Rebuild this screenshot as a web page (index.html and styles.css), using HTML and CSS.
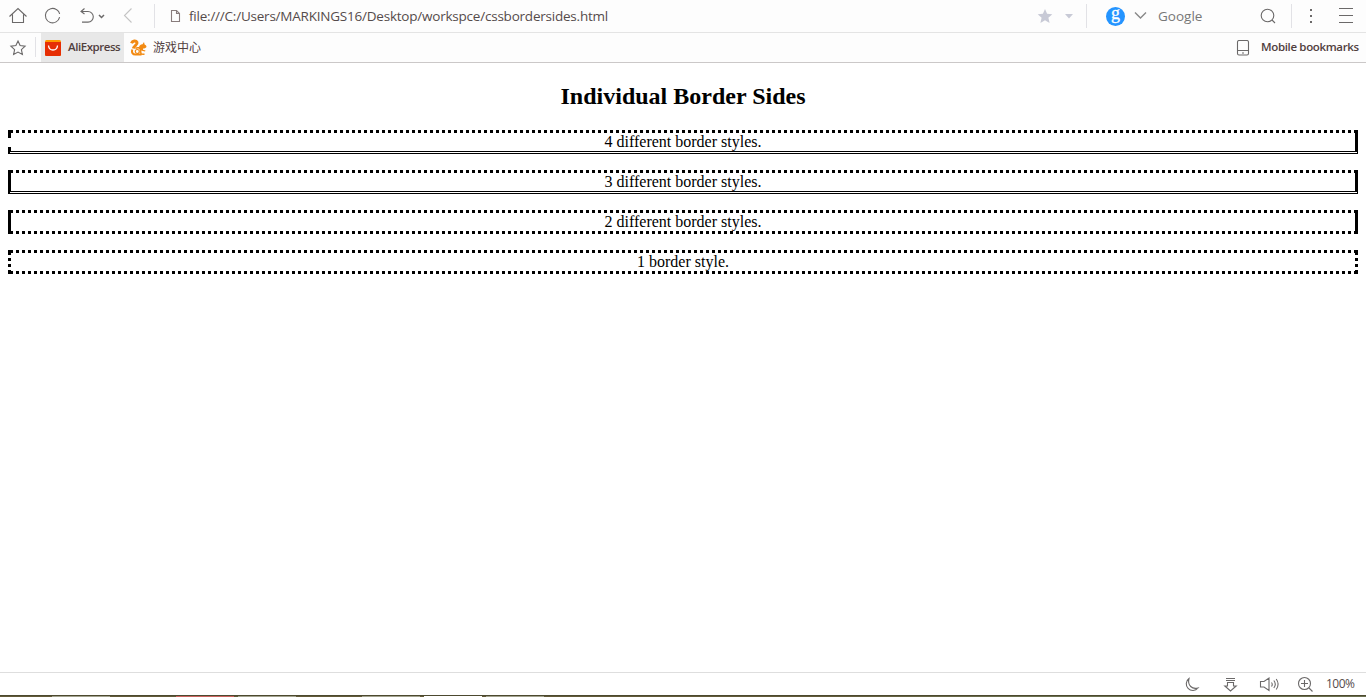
FILE: index.html
```html
<!DOCTYPE html>
<html lang="en">
<head>
<meta charset="utf-8">
<title>Individual Border Sides</title>
<link rel="stylesheet" href="styles.css">
</head>
<body>
<header class="toolbar">
  <svg class="icon tools" width="155" height="32" viewBox="0 0 155 32">
    <path d="M9.500 16.500 18 8.500l8.500 8M12.500 14.500v8h11v-8" />
    <path d="M56.500 9.600a7.200 7.200 0 1 0 3.100 7.500M59.600 14A7 7 0 0 0 54.500 8.800" />
    <path d="M84.500 8.500 81 11.500l3.500 2.500M81 11.500h7a5.300 5.300 0 0 1 0 10.600H82" />
    <path class="bold" d="M99 15l2.500 2.500L104 15" />
    <path class="pale" d="M131.500 8.500 124.500 15.500l7 7" />
    <path class="rule" d="M154.500 4v24" />
  </svg>
  <svg class="icon page-icon" width="12" height="14" viewBox="0 0 12 14"><path d="M1.500 1.500h5l3 3v8h-8zM6.500 1.500v3h3" /></svg>
  <span class="address">file:///C:/Users/MARKINGS16/Desktop/workspce/cssbordersides.html</span>
  <svg class="icon star" width="70" height="32" viewBox="1034 0 70 32">
    <path class="pale-fill" d="M1045 9l2.100 4.800 5.200.5-3.900 3.500 1.200 5.200-4.600-2.700-4.600 2.700 1.200-5.200-3.900-3.500 5.200-.5zM1065 14h8l-4 4.500z" />
    <path class="rule" d="M1086.500 4v24" />
  </svg>
  <span class="engine">g</span>
  <svg class="icon chevron" width="33" height="32" viewBox="1125 0 33 32"><path d="M1135 12.500l5.500 5.500 5.500-5.500" /></svg>
  <span class="search">Google</span>
  <svg class="icon actions" width="116" height="32" viewBox="1250 0 116 32">
    <circle cx="1267.500" cy="15.500" r="6.300" /><path d="M1272 20l3 3" />
    <path class="rule" d="M1291.500 4v24" />
    <path class="dots" d="M1310 9h2v2h-2zM1310 15h2v2h-2zM1310 21h2v2h-2z" />
    <path d="M1339 8.500h14M1339 15.500h14M1339 22.500h14" />
  </svg>
</header>
<nav class="bookmarks">
  <svg class="icon" width="41" height="29" viewBox="0 33 41 29">
    <path d="M18 41l2.100 4.600 5 .6-3.700 3.400 1 4.900-4.400-2.400-4.400 2.400 1-4.900-3.700-3.400 5-.6z" />
    <path class="rule" d="M35.500 37v20" />
  </svg>
  <a class="bookmark active">
    <svg width="16" height="16" viewBox="0 0 16 16"><rect width="16" height="16" rx="1.500" fill="#f90" /><path d="M0 2h16v12.500q0 1.500-1.500 1.500h-13Q0 16 0 14.500z" fill="#e62e04" /><path d="M3.500 5.500c.5 6 8.500 6 9 0" fill="none" stroke="#fff" stroke-width="1.300" /></svg>
    <span>AliExpress</span>
  </a>
  <a class="bookmark games">
    <svg width="17" height="17" viewBox="0 0 17 17">
      <g fill="none" stroke="#f28a12">
        <path d="M1.500 4.200C2.500 1.500 6 1.200 7 3.400 7.800 5.600 3.800 7 3.500 9.500" stroke-width="3" />
        <path d="M2.200 10.500C1.500 13.500 2.500 15.500 5.500 15.500h6" stroke-width="2" />
        <circle cx="7.300" cy="12.500" r="2" stroke-width="1.200" />
        <path d="M5.500 9.500c2-1.500 4.500-1 5 1.500l.5 4 3.500.2" stroke-width="1.500" />
      </g>
      <path d="M9 8.500c0-2 1.500-3 3.500-3.300L14 3l.6 2.500c1.300.6 1.900 1.500 1.900 2.500-1 1.200-2 1.500-3.500 1.500v1.200l2.500.8-.5 1-4-1z" fill="#f28a12" />
    </svg>
    <span>游戏中心</span>
  </a>
  <svg class="icon mobile" width="14" height="16" viewBox="0 0 14 16"><rect x="1.500" y=".5" width="11" height="14.500" rx="1.500" /><path d="M1.500 10.500h11M6 13h2" /></svg>
  <span class="mobile-label">Mobile bookmarks</span>
</nav>
<main class="content">
  <h2 class="title">Individual Border Sides</h2>
  <p class="box dot-top broken-left solid-right double-bottom">4 different border styles.</p>
  <p class="box dot-top solid-left solid-right double-bottom">3 different border styles.</p>
  <p class="box dot-top dot-bottom solid-left solid-right">2 different border styles.</p>
  <p class="box dot-top dot-bottom dot-sides">1 border style.</p>
</main>
<footer class="status">
  <svg class="icon" width="160" height="22" viewBox="1166 673 160 22">
    <path d="M1189 678.500a6.600 6.600 0 1 0 9 9.500c-3 .8-5.500.3-7.300-1.500s-2.500-5-1.700-8z" />
    <path d="M1226 678.500h9M1226 680.500h9M1227.500 682.500h6v3.500h2.700l-5.700 5-5.700-5h2.700z" />
    <path d="M1260.500 681.500h3.500l5-3.500v12.500l-5-3.500h-3.500zM1271.500 682.500q1.500 2 0 4M1273.800 680.500q3 3.700 0 7.500M1276.200 679q3.800 5 0 10.500" />
    <circle cx="1304.500" cy="683.500" r="6" /><path d="M1301 683.500h7M1304.500 680v7M1309 688l3.500 3.500" />
  </svg>
  <span class="zoom">100%</span>
</footer>
<div class="taskbar">
  <i class="gap-first"></i><i class="task"></i><i class="gap-wide"></i><i class="task alert"></i><i class="task"></i><i class="gap-wide"></i><i class="task"></i><i class="task current"></i><i class="task"></i>
</div>
</body>
</html>
```
FILE: styles.css
```css
* { box-sizing: border-box; }
body {
  margin: 0;
  height: 697px;
  display: flex;
  flex-direction: column;
  overflow: hidden;
  background: #fff;
  color: #000;
  font-family: "Liberation Serif", serif;
}
svg { display: block; flex: none; }
.icon { fill: none; stroke: #6b6969; stroke-width: 1.1; }
.icon .rule { stroke: #e2e2e6; stroke-width: 1; }
.icon .pale { stroke: #c4c4c4; }
.icon .bold { stroke-width: 1.5; }
.icon .pale-fill { fill: #c8cad6; stroke: none; }
.icon .dots { fill: #6b6969; stroke: none; }
.toolbar {
  height: 33px;
  flex: none;
  display: flex;
  align-items: center;
  border-bottom: 1px solid #e4e4e4;
  background: #fdfdfd;
  font: 13.5px/20px "Open Sans", sans-serif;
  color: #554b4b;
}
.page-icon { margin-left: 15px; stroke: #887c7c; }
.address { width: 420px; margin-left: 7px; letter-spacing: -0.22px; white-space: nowrap; }
.star { margin-left: auto; }
.engine {
  width: 19px;
  height: 19px;
  margin-left: 2px;
  border-radius: 50%;
  background: #2494ff;
  color: #fff;
  font: 400 18px/13px "Liberation Serif", serif;
  -webkit-text-stroke: 0.3px #fff;
  text-align: center;
}
.chevron { stroke: #888; stroke-width: 1.4; }
.search { width: 92px; color: #777; }
.bookmarks {
  height: 30px;
  flex: none;
  display: flex;
  align-items: center;
  border-bottom: 1px solid #cbc8c8;
  background: #fdfdfd;
  color: #51403e;
  font: 600 11.5px/16px "Open Sans", "Noto Sans CJK SC", sans-serif;
  letter-spacing: -0.45px;
}
.bookmark { height: 29px; display: flex; align-items: center; gap: 7px; white-space: nowrap; }
.bookmark span, .mobile-label { padding-bottom: 1px; }
.active { width: 83px; padding-left: 4px; background: #e8e8e8; }
.games { padding-left: 6px; gap: 6px; font: 400 12px/16px "Noto Sans CJK SC", sans-serif; letter-spacing: 0; }
.mobile { margin-left: auto; }
.mobile-label { width: 105px; margin-left: 11px; letter-spacing: -0.35px; white-space: nowrap; }
.content { flex: 1; padding: 20px 8px 0; }
.title { margin: 0 0 20px; font-size: 24px; line-height: 27px; text-align: center; }
.box {
  position: relative;
  height: 24px;
  margin: 0 0 16px;
  padding: 3px 0;
  font-size: 16px;
  line-height: 18px;
  text-align: center;
}
.dot-top, .dot-bottom {
  --dots: repeating-linear-gradient(90deg, #000 0 3px, transparent 3px 6px);
  background: var(--dots) 2px 0 / 1347px 3px no-repeat;
}
.dot-bottom { background: var(--dots) 2px 0 / 1347px 3px no-repeat, var(--dots) 2px 21px / 1347px 3px no-repeat; }
.solid-left::before, .broken-left::before, .dot-sides::before,
.solid-right::after, .dot-sides::after {
  content: "";
  position: absolute;
  top: 0;
  left: 0;
  width: 3px;
  height: 24px;
  background: #000;
}
.solid-right::after, .dot-sides::after { left: auto; right: 0; }
.broken-left::before { background: linear-gradient(#000 0 8px, transparent 8px 17px, #000 17px); }
.dot-sides::before, .dot-sides::after {
  background: linear-gradient(#000 0 5px, transparent 5px 8px, #000 8px 11px, transparent 11px 14px, #000 14px 17px, transparent 17px 20px, #000 20px);
}
.double-bottom {
  background:
    linear-gradient(#000 0 1px, #fff 1px 2px, #000 2px) 0 21px / 100% 3px no-repeat,
    var(--dots) 2px 0 / 1347px 3px no-repeat;
}
.double-bottom::before { clip-path: polygon(0 0, 3px 0, 3px 22px, 2px 22px, 2px 23px, 3px 23px, 3px 24px, 0 24px); }
.double-bottom::after { clip-path: polygon(0 0, 3px 0, 3px 24px, 0 24px, 0 23px, 2px 23px, 2px 22px, 0 22px); }
.status {
  height: 23px;
  flex: none;
  display: flex;
  align-items: center;
  justify-content: flex-end;
  border-top: 1px solid #dedede;
  font: 12px/18px "Open Sans", sans-serif;
  letter-spacing: -0.5px;
  color: #554b4b;
}
.zoom { width: 40px; }
.taskbar {
  height: 2px;
  flex: none;
  display: flex;
  gap: 4px;
  padding-top: 1px;
  background: linear-gradient(#4c492f 0 1px, transparent 1px), linear-gradient(90deg, #625a39 0 60%, #6b704f 75%, #6b704f);
}
.gap-first { width: 48px; }
.gap-wide { width: 58px; }
.task { width: 58px; height: 1px; background: #a3a38f; }
.alert { background: #cc6460; }
.current { background: #fff; }
```
